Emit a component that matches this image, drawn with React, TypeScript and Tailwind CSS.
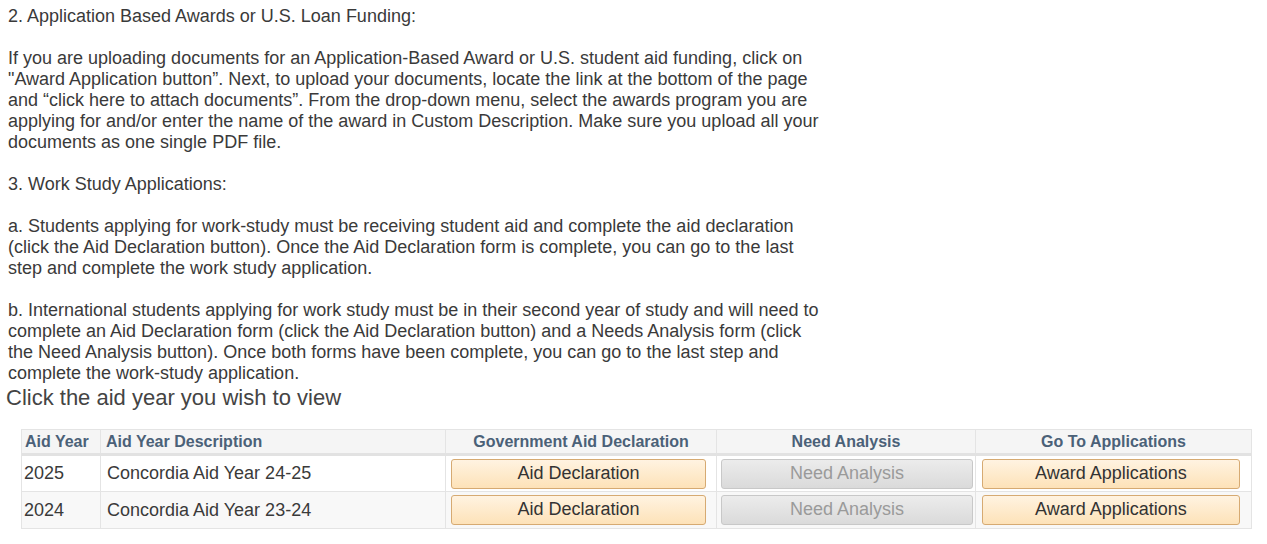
import React from "react";

const btnOrange =
  "h-[30px] rounded-[3px] border border-[#d6aa72] bg-gradient-to-b from-[#fff3e1] to-[#fde2b8] text-[#333] text-[18px] leading-[27px] text-center";
const btnGray =
  "h-[30px] rounded-[3px] border border-[#c8c8c8] bg-gradient-to-b from-[#ececec] to-[#dadada] text-[#9a9a9a] text-[18px] leading-[27px] text-center";

const rows = [
  { year: "2025", desc: "Concordia Aid Year 24-25", bg: "bg-white" },
  { year: "2024", desc: "Concordia Aid Year 23-24", bg: "bg-[#f8f8f8]" },
];

export default function App() {
  return (
    <div
      className="w-[1267px] h-[544px] bg-white overflow-hidden"
      style={{ fontFamily: '"Liberation Sans", Arial, sans-serif' }}
    >
      <div className="pt-[6px] pl-[8px] w-[828px] text-[18px] leading-[21px] text-[#3a3a3a]">
        <p>2. Application Based Awards or U.S. Loan Funding:</p>
        <p className="mt-[21px]">
          If you are uploading documents for an Application-Based Award or U.S. student aid funding, click on
          "Award Application button”. Next, to upload your documents, locate the link at the bottom of the page
          and “click here to attach documents”. From the drop-down menu, select the awards program you are
          applying for and/or enter the name of the award in Custom Description. Make sure you upload all your
          documents as one single PDF file.
        </p>
        <p className="mt-[21px]">3. Work Study Applications:</p>
        <p className="mt-[21px]">
          a. Students applying for work-study must be receiving student aid and complete the aid declaration
          (click the Aid Declaration button). Once the Aid Declaration form is complete, you can go to the last
          step and complete the work study application.
        </p>
        <p className="mt-[21px]">
          b. International students applying for work study must be in their second year of study and will need to
          complete an Aid Declaration form (click the Aid Declaration button) and a Needs Analysis form (click
          the Need Analysis button). Once both forms have been complete, you can go to the last step and
          complete the work-study application.
        </p>
      </div>
      <div className="pl-[6px] text-[22px] leading-[26px] text-[#444] mt-[1px]">
        Click the aid year you wish to view
      </div>
      <div className="ml-[21px] mt-[18px] w-[1231px] border border-[#e4e4e4]">
        <div className="flex bg-[#f5f5f5] border-b-[3px] border-[#e2e2e2] h-[26px] text-[16px] font-bold text-[#4b6178] leading-[24px]">
          <div className="w-[79px] pl-[3px] border-r border-[#e4e4e4]">Aid Year</div>
          <div className="w-[345px] pl-[5px] border-r border-[#e4e4e4]">Aid Year Description</div>
          <div className="w-[271px] text-center border-r border-[#e4e4e4]">Government Aid Declaration</div>
          <div className="w-[259px] text-center border-r border-[#e4e4e4]">Need Analysis</div>
          <div className="flex-1 text-center">Go To Applications</div>
        </div>
        {rows.map((r, i) => (
          <div
            key={r.year}
            className={`flex h-[36px] items-center text-[18px] text-[#3a3a3a] ${r.bg} ${i === 0 ? "border-b border-[#e4e4e4]" : ""}`}
          >
            <div className="w-[79px] h-full flex items-center pl-[2px] border-r border-[#e4e4e4]">{r.year}</div>
            <div className="w-[345px] h-full flex items-center pl-[6px] border-r border-[#e4e4e4]">{r.desc}</div>
            <div className="w-[271px] h-full flex items-center pl-[5px] border-r border-[#e4e4e4]">
              <div className={`${btnOrange} w-[255px]`}>Aid Declaration</div>
            </div>
            <div className="w-[259px] h-full flex items-center pl-[4px] border-r border-[#e4e4e4]">
              <div className={`${btnGray} w-[252px]`}>Need Analysis</div>
            </div>
            <div className="flex-1 h-full flex items-center pl-[6px]">
              <div className={`${btnOrange} w-[258px]`}>Award Applications</div>
            </div>
          </div>
        ))}
      </div>
    </div>
  );
}
